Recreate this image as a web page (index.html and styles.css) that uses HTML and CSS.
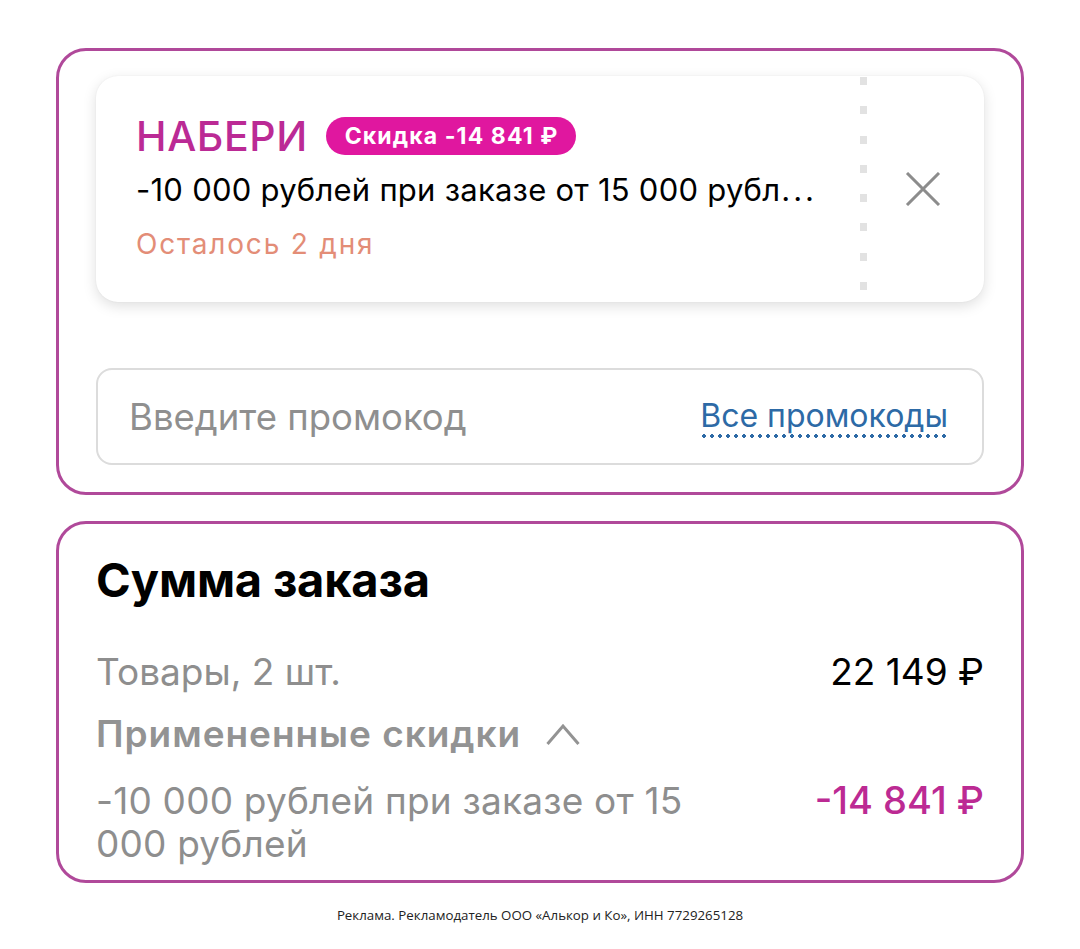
FILE: index.html
```html
<!DOCTYPE html>
<html lang="ru">
<head>
<meta charset="utf-8">
<title>Корзина</title>
<link rel="stylesheet" href="styles.css">
</head>
<body>
<main class="page">
  <section class="card promo-card">
    <div class="coupon">
      <div class="coupon-body">
        <div class="coupon-head">
          <span class="coupon-code">НАБЕРИ</span>
          <span class="coupon-badge">Скидка -14 841 ₽</span>
        </div>
        <div class="coupon-desc" title="-10 000 рублей при заказе от 15 000 рублей">-10 000 рублей при заказе от 15 000 рубл<span class="dots">...</span></div>
        <div class="coupon-left">Осталось 2 дня</div>
      </div>
      <div class="coupon-divider"></div>
      <button class="coupon-close" type="button" aria-label="Убрать промокод">
        <svg width="36" height="34" viewBox="0 0 36 34"><path d="M2 1 L34 33 M34 1 L2 33" stroke="#8c8c8c" stroke-width="3" fill="none"/></svg>
      </button>
    </div>
    <label class="promo-input">
      <span class="promo-placeholder">Введите промокод</span>
      <span class="promo-link">Все промокоды</span>
    </label>
  </section>

  <section class="card summary-card">
    <h2 class="summary-title">Сумма заказа</h2>
    <div class="row goods-row">
      <span class="row-label">Товары, 2 шт.</span>
      <span class="row-value">22 149 ₽</span>
    </div>
    <div class="row discounts-head">
      <span>Примененные скидки</span>
      <svg class="chevron" width="34" height="24" viewBox="0 0 34 24"><path d="M1.5 22 L17 4 L32.5 22" stroke="#939393" stroke-width="3" fill="none"/></svg>
    </div>
    <div class="row discount-row">
      <span class="row-label discount-label">-10 000 рублей при заказе от 15 000 рублей</span>
      <span class="row-value discount-value">-14 841 ₽</span>
    </div>
  </section>

  <footer class="ad-note">Реклама. Рекламодатель ООО «Алькор и Ко», ИНН 7729265128</footer>
</main>
</body>
</html>
```

FILE: styles.css
```css
* { box-sizing: border-box; }

html, body {
  margin: 0;
  padding: 0;
  background: #ffffff;
}

body {
  font-family: Inter, "Noto Sans", "Liberation Sans", sans-serif;
  color: #000;
}

.page {
  width: 968px;
  margin: 0 auto;
  padding-top: 48px;
  display: flex;
  flex-direction: column;
}

.card {
  border: 3px solid #b0499a;
  border-radius: 30px;
  background: #fff;
}

/* promo block */
.promo-card {
  height: 447px;
  padding: 25px 37px 0;
  display: flex;
  flex-direction: column;
}

.coupon {
  height: 226px;
  border-radius: 22px;
  background: #fff;
  box-shadow: 0 4px 14px rgba(0, 0, 0, 0.13), 0 0 2px rgba(0, 0, 0, 0.06);
  display: flex;
}

.coupon-body {
  flex: 1;
  min-width: 0;
  padding: 40px 20px 0 40px;
  display: flex;
  flex-direction: column;
}

.coupon-head {
  display: flex;
  align-items: center;
  gap: 18px;
  height: 40px;
}

.coupon-code {
  font-size: 41px;
  font-weight: 500;
  color: #bb2a95;
  letter-spacing: 0.6px;
}

.coupon-badge {
  background: #e0179f;
  color: #fff;
  font-size: 23px;
  font-weight: 700;
  letter-spacing: 1.1px;
  height: 38px;
  line-height: 38px;
  padding: 0 18px 0 19px;
  border-radius: 19px;
}

.coupon-desc {
  margin-top: 14px;
  font-size: 31px;
  letter-spacing: 0.25px;
  line-height: 40px;
  white-space: nowrap;
  overflow: hidden;
}

.coupon-desc .dots {
  letter-spacing: 3px;
  margin-left: 1px;
}

.coupon-left {
  margin-top: 18px;
  font-size: 28px;
  letter-spacing: 1.8px;
  line-height: 32px;
  color: #e38d77;
}

.coupon-divider {
  width: 7px;
  align-self: stretch;
  margin-bottom: 6px;
  background: repeating-linear-gradient(to bottom, #e2e2e2 0 8px, transparent 8px 29.3px);
  background-position: 0 1px;
}

.coupon-close {
  width: 117px;
  border: 0;
  background: none;
  padding: 0 6px 0 0;
  display: flex;
  align-items: center;
  justify-content: center;
}

.promo-input {
  margin-top: 66px;
  height: 97px;
  border: 2px solid #dcdcdc;
  border-radius: 16px;
  display: flex;
  align-items: center;
  justify-content: space-between;
  padding: 0 34px 0 33px;
}

.promo-placeholder {
  font-size: 36.5px;
  color: #8f8f8f;
  margin-left: -2px;
}

.promo-link {
  font-size: 32px;
  color: #2d6aa6;
  padding-bottom: 3px;
  background: radial-gradient(circle, #2d6aa6 1.6px, transparent 1.8px) repeat-x 0 100% / 8px 4px;
}

/* summary block */
.summary-card {
  margin-top: 26px;
  height: 362px;
  padding: 31px 37px 0;
}

.summary-title {
  margin: 0;
  font-size: 47px;
  line-height: 50px;
  font-weight: 700;
  letter-spacing: -0.2px;
}

.row {
  display: flex;
  justify-content: space-between;
  align-items: flex-start;
  font-size: 37px;
  line-height: 43px;
}

.goods-row { margin-top: 45px; }

.row-label { color: #8e8e8e; }
.row-value { color: #000; }

.discounts-head {
  margin-top: 19px;
  justify-content: flex-start;
  align-items: center;
  gap: 25px;
  color: #939393;
  font-size: 37px;
  font-weight: 600;
  letter-spacing: 0.95px;
}

.discount-row {
  margin-top: 24px;
}

.discount-label {
  width: 620px;
  letter-spacing: 0.2px;
}

.discount-value {
  color: #bc2a93;
  font-weight: 500;
  font-size: 38px;
}

.ad-note {
  margin-top: 23px;
  text-align: center;
  font-family: "Open Sans", "Liberation Sans", sans-serif;
  font-size: 13.3px;
  color: #222;
}
```
